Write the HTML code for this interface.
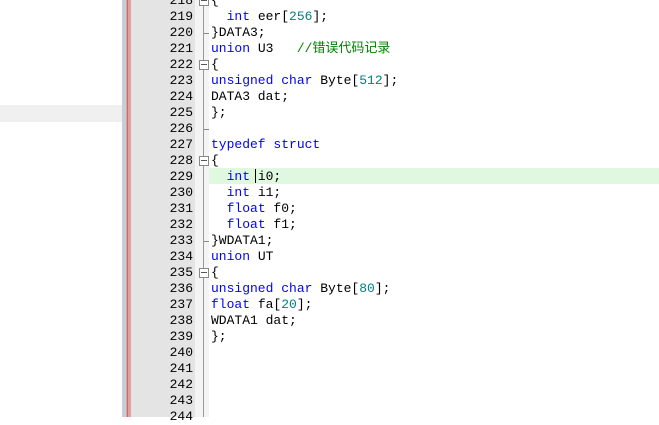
<!DOCTYPE html>
<html><head><style>
body{margin:0;width:659px;height:417px;overflow:hidden;background:#fff;position:relative;font-family:"Liberation Mono","Noto Sans CJK SC",monospace;font-size:13px}
.abs{position:absolute}
.ln{position:absolute;left:131px;width:62px;text-align:right;color:#000;height:16px;line-height:16px}
.cd{position:absolute;left:211px;height:16px;line-height:16px;white-space:pre;color:#000}
.k{color:#0000ff}.n{color:#008080}.c{color:#008000}
.fb{position:absolute;left:199px;width:8px;height:8px;border:1px solid #888;background:#fff}
.fb:after{content:"";position:absolute;left:1px;top:3px;width:6px;height:1px;background:#555}
.fe{position:absolute;left:204px;width:5px;height:1px;background:#888}
</style></head><body>
<div class="abs" style="left:0;top:105px;width:122px;height:17px;background:#f0f0f0"></div>
<div class="abs" style="left:122px;top:0;width:4px;height:417px;background:#c8ccd4"></div>
<div class="abs" style="left:126px;top:0;width:5px;height:417px;background:#e0a0a0"></div>
<div class="abs" style="left:127px;top:0;width:1px;height:417px;background:#c07070"></div>
<div class="abs" style="left:131px;top:0;width:64px;height:417px;background:#e4e4e4"></div>
<div class="abs" style="left:195px;top:0;width:14px;height:417px;background:#f4f4f4"></div>
<div class="abs" style="left:203px;top:0;width:1px;height:417px;background:#999"></div>
<div class="abs" style="left:209px;top:168px;width:450px;height:16px;background:#e0f8e0"></div>
<div class="abs" style="left:255px;top:169px;width:1px;height:14px;background:#000"></div>
<div id="L"></div>
<script>
var lines={218:'{',219:'  <span class="k">int</span> eer[<span class="n">256</span>];',220:'}DATA3;',221:'<span class="k">union</span> U3   <span class="c">//错误代码记录</span>',222:'{',223:'<span class="k">unsigned char</span> Byte[<span class="n">512</span>];',224:'DATA3 dat;',225:'};',226:'',227:'<span class="k">typedef struct</span>',228:'{',229:'  <span class="k">int</span> i0;',230:'  <span class="k">int</span> i1;',231:'  <span class="k">float</span> f0;',232:'  <span class="k">float</span> f1;',233:'}WDATA1;',234:'<span class="k">union</span> UT',235:'{',236:'<span class="k">unsigned char</span> Byte[<span class="n">80</span>];',237:'<span class="k">float</span> fa[<span class="n">20</span>];',238:'WDATA1 dat;',239:'};',240:'',241:'',242:'',243:'',244:''};
var h='';
for(var n=218;n<=244;n++){var t=(n-218)*16-7;
h+='<div class="ln" style="top:'+t+'px">'+n+'</div><div class="cd" style="top:'+t+'px">'+lines[n]+'</div>';
if(n==218||n==222||n==228||n==235)h+='<div class="fb" style="top:'+(t+3)+'px"></div>';
if(n==220||n==226||n==233)h+='<div class="fe" style="top:'+(t+8)+'px"></div>';}
document.getElementById('L').innerHTML=h;
</script>
</body></html>
